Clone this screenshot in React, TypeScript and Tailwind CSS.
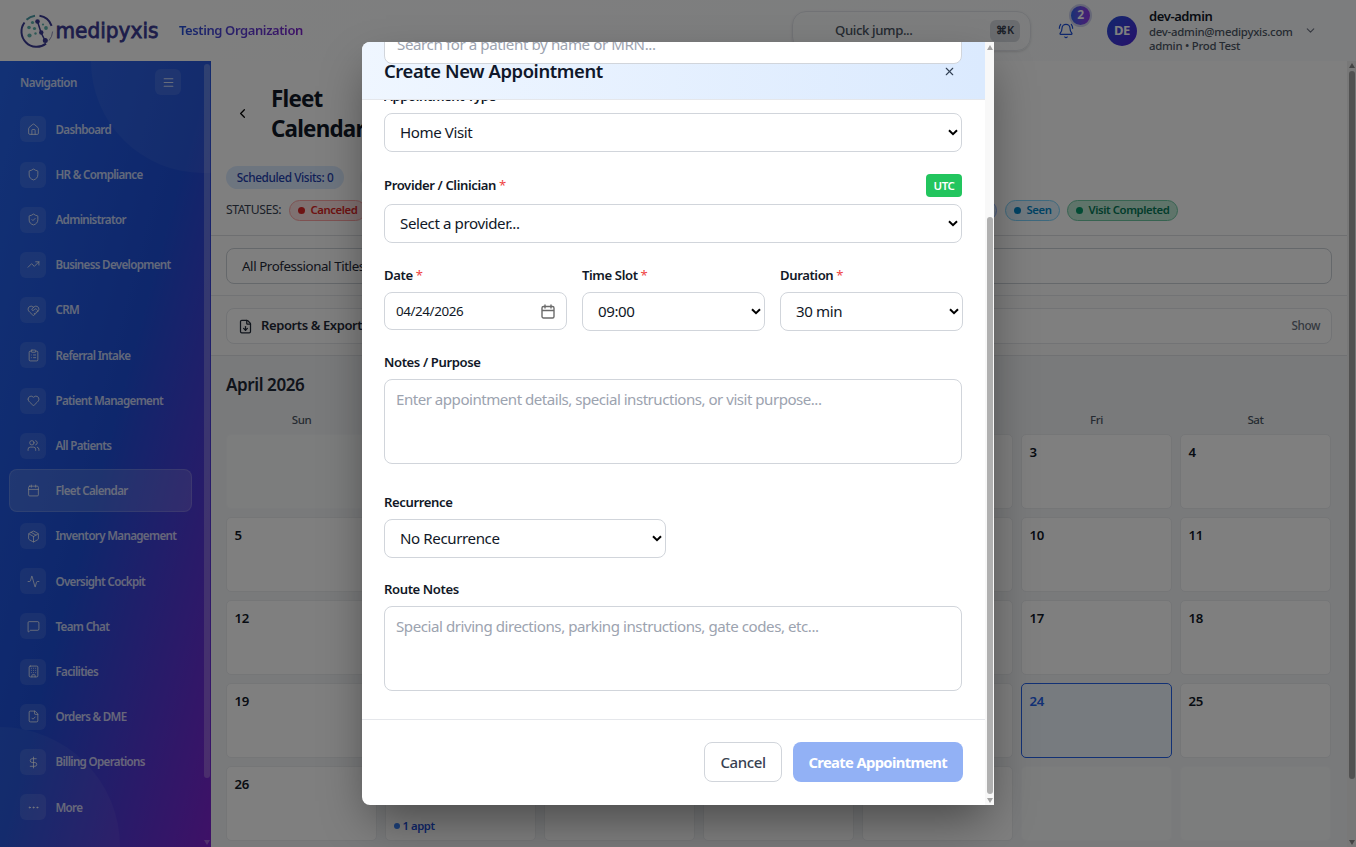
import React from "react";
import {
  House, Shield, ShieldCheck, TrendingUp, HeartHandshake, ClipboardList, Heart, Users, Calendar, Package,
  Activity, MessageSquare, Building, FileCheck, DollarSign, Ellipsis, Menu, ChevronLeft, ChevronDown, X, BellRing, FileDown,
} from "lucide-react";

const NAV: [string, React.ElementType][] = [
  ["Dashboard", House],
  ["HR & Compliance", Shield],
  ["Administrator", ShieldCheck],
  ["Business Development", TrendingUp],
  ["CRM", HeartHandshake],
  ["Referral Intake", ClipboardList],
  ["Patient Management", Heart],
  ["All Patients", Users],
  ["Fleet Calendar", Calendar],
  ["Inventory Management", Package],
  ["Oversight Cockpit", Activity],
  ["Team Chat", MessageSquare],
  ["Facilities", Building],
  ["Orders & DME", FileCheck],
  ["Billing Operations", DollarSign],
  ["More", Ellipsis],
];

const DAYS = ["Sun", "Mon", "Tue", "Wed", "Thu", "Fri", "Sat"];
const FIRST_WEEKDAY = 3;
const CELLS = Array.from({ length: 35 }, (_, i) => {
  const d = i - FIRST_WEEKDAY + 1;
  return d >= 1 && d <= 30 ? d : null;
});

function Logo() {
  return (
    <svg width="142" height="36" viewBox="0 0 142 36" className="block overflow-visible">
      <g fill="none" stroke="#3a3a94" strokeWidth="2">
        <path d="M4.5 9.5 A15.2 15.2 0 0 0 26 30.6" />
        <path d="M29 27.5 A15.2 15.2 0 0 0 32.6 18.5" strokeWidth="1" stroke="#8f90b8" />
        <path d="M6.5 6.8 A15.2 15.2 0 0 1 15 2.7" stroke="#4a9aa5" />
        <path d="M19.5 2.8 A15.2 15.2 0 0 1 31.6 12.8" />
        <path d="M17.5 8.5 L21 19.5 L25 27.5" strokeWidth="1.5" />
      </g>
      <g fill="#3a3a94">
        <circle cx="17.5" cy="8.5" r="2.3" />
        <circle cx="21.3" cy="19.5" r="2.2" />
        <circle cx="25.3" cy="27.5" r="2.5" />
      </g>
      <g fill="#5fb3ae">
        <circle cx="12.5" cy="9.5" r="1.6" />
        <circle cx="9" cy="14.5" r="1.8" />
        <circle cx="14.5" cy="15.5" r="1.6" />
        <circle cx="9.5" cy="22.5" r="2.1" />
        <circle cx="15.5" cy="20.5" r="1.2" />
        <circle cx="26" cy="15" r="1.9" />
        <circle cx="23" cy="11.5" r="1.1" />
      </g>
      <text x="35.5" y="24.8" fontSize="21.5" fill="#3a3a94" stroke="#3a3a94" strokeWidth="0.8" textLength="103" lengthAdjust="spacingAndGlyphs" letterSpacing="0" fontFamily="DejaVu Sans, sans-serif">
        medipyxis
      </text>
    </svg>
  );
}

function Header() {
  return (
    <header className="flex h-[61px] shrink-0 items-center bg-gradient-to-r from-white to-[#f8fafc]">
      <div className="ml-[20px] w-[159px]"><Logo /></div>
      <div className="w-[613px] bg-gradient-to-r from-[#1d4ed8] to-[#7e22ce] bg-[length:124px_100%] bg-clip-text text-[13px] font-semibold text-transparent">
        Testing Organization
      </div>
      <div className="flex h-10 w-[239px] items-center justify-between rounded-[14px] border border-[#e2e5ea] pr-2.5 pl-[42px] shadow-sm">
        <span className="text-[13.2px] font-medium text-[#4b5563]">Quick jump...</span>
        <span className="flex h-[22px] w-[30px] items-center justify-center rounded-md bg-[#d5d8de] text-[11px] font-semibold text-[#374151]">⌘K</span>
      </div>
      <div className="relative ml-[27px] h-4 w-4 text-[#1d4ed8]">
        <BellRing size={16} strokeWidth={1.8} />
        <span className="absolute -top-[19px] left-[11px] flex h-[23px] w-[23px] items-center justify-center rounded-full border-2 border-[#cdd0ee] bg-gradient-to-r from-[#2563eb] to-[#9333ea] text-[12px] font-bold text-white">2</span>
      </div>
      <div className="ml-[33px] flex h-[30px] w-[30px] items-center justify-center rounded-full bg-gradient-to-br from-[#1d4ed8] to-[#4c1dd8] text-[13px] font-bold text-white">DE</div>
      <div className="ml-[12px] w-[155px]">
        <div className="text-[13px] leading-[17px] font-semibold text-[#111827]">dev-admin</div>
        <div className="text-[11.4px] leading-[14px] font-medium tracking-[-0.022em] text-[#4b5563]">dev-admin@medipyxis.com</div>
        <div className="text-[11.4px] leading-[14px] font-medium tracking-[-0.022em] text-[#4b5563]">admin • Prod Test</div>
      </div>
      <ChevronDown size={13} className="text-[#6b7280]" />
    </header>
  );
}

function Sidebar() {
  return (
    <aside className="relative flex w-[211px] shrink-0 overflow-hidden bg-[linear-gradient(to_bottom_right,#2563eb_0%,#1d4ed8_50%,#7e22ce_100%)]">
      <div className="absolute -top-[112px] left-[91px] h-56 w-56 rounded-full bg-white/5" />
      <div className="absolute -bottom-[120px] -left-[120px] h-60 w-60 rounded-full bg-white/5" />
      <div className="relative w-[203px] text-white/75">
        <div className="flex h-[46.8px] items-start justify-between pt-[8px] pr-[22px] pl-5">
          <span className="text-[11.7px] leading-[26px] font-semibold tracking-[-0.05em]">Navigation</span>
          <span className="flex h-[26px] w-[26px] items-center justify-center rounded-md bg-white/10"><Menu size={13} /></span>
        </div>
        <nav className="flex flex-col gap-[2px] pr-[11px] pl-[9px]">
          {NAV.map(([label, Icon]) => (
            <div
              key={label}
              className={
                label === "Fleet Calendar"
                  ? "flex h-[43.2px] shrink-0 items-center rounded-lg border border-white/15 bg-white/15 pl-2.5"
                  : "flex h-[43.2px] shrink-0 items-center rounded-lg border border-transparent pl-2.5"
              }
            >
              <span className={label === "Fleet Calendar" ? "flex h-[26px] w-[26px] items-center justify-center" : "flex h-[26px] w-[26px] items-center justify-center rounded-md bg-white/10"}>
                <Icon size={13} strokeWidth={1.8} />
              </span>
              <span className="ml-[9.5px] text-[11.6px] font-semibold tracking-[-0.058em]">{label}</span>
            </div>
          ))}
        </nav>
      </div>
      <div className="relative flex w-2 flex-col items-center justify-between pt-[3px] pb-[2px]">
        <div className="h-[714px] w-[6px] rounded-full bg-white/25" />
        <div className="h-0 w-0 border-x-[3px] border-t-[5px] border-x-transparent border-t-white/30" />
      </div>
    </aside>
  );
}

function Status({ label, tone, dot }: { label: string; tone: string; dot: string }) {
  return (
    <span className={`flex h-[21px] items-center gap-[6px] rounded-full border px-[7.5px] text-[11.3px] font-semibold ${tone}`}>
      <span className={`h-[7px] w-[7px] rounded-full ${dot}`} />
      {label}
    </span>
  );
}

function Main() {
  return (
    <main className="flex min-w-0 flex-1 bg-[#f3f5f7]">
      <div className="flex w-[1136px] flex-col">
        <section className="h-[175px] shrink-0 border-b border-[#dcdfe3] bg-white pl-[15px]">
          <div className="flex h-[105px] items-center">
            <ChevronLeft size={15} className="ml-[9px]" />
            <h1 className="ml-[21px] pt-[1px] text-[22.4px] leading-[30px] font-bold tracking-[-0.035em] text-[#111827]">
              Fleet<br />Calendar
            </h1>
          </div>
          <div className="flex gap-[16px]">
            <span className="flex h-[23px] w-[118px] items-center justify-center rounded-full bg-[#dbeafe] text-[11.8px] font-medium text-[#1e40af]">Scheduled Visits: 0</span>
            <span className="h-[23px] w-[110px] rounded-full bg-[#f3f4f6]" />
          </div>
          <div className="mt-[11px] flex h-[21px] items-center">
            <span className="w-[63px] text-[12.2px] text-[#374151]">STATUSES:</span>
            <div className="w-[709px]">
              <div className="flex">
                <Status label="Canceled" tone="border-[#fca5a5] bg-[#fee2e2] text-[#dc2626]" dot="bg-[#dc2626]" />
              </div>
            </div>
            <div className="-ml-[83px] h-[21px] w-[82px] rounded-full border border-[#93b4fd] bg-[#dbeafe]" />
            <div className="ml-[8px] flex gap-[7px]">
              <Status label="Seen" tone="border-[#7dd3fc] bg-[#e0f2fe] text-[#0284c7]" dot="bg-[#0284c7]" />
              <Status label="Visit Completed" tone="border-[#6ec7a3] bg-[#bfe8d4] text-[#047857]" dot="bg-[#059669]" />
            </div>
          </div>
        </section>
        <section className="h-[60px] shrink-0 border-b border-[#e5e7eb] bg-[#fdfdfd] px-[15px] pt-[12px]">
          <div className="flex h-[36px] items-center rounded-lg border border-[#cbd0d6] bg-white pt-[2px] pl-[15px] text-[13.3px] text-[#1f2937]">All Professional Titles</div>
        </section>
        <section className="h-[60px] shrink-0 border-b border-[#e0e3e6] bg-[#fafbfb] px-[15px] pt-[12px]">
          <div className="flex h-[36px] items-center justify-between rounded-lg border border-[#e5e7eb] bg-white pr-[11px] pl-[11px]">
            <span className="flex items-center gap-[8px] text-[13px] font-semibold tracking-[-0.03em] text-[#1f2937]"><FileDown size={15} />Reports &amp; Exports</span>
            <span className="text-[11.7px] font-medium text-[#6b7280]">Show</span>
          </div>
        </section>
        <section className="pt-[16px] pr-[16px] pl-[15px]">
          <h2 className="text-[17px] leading-[26px] font-semibold text-[#1f2937]">April 2026</h2>
          <div className="mt-[14px] grid grid-cols-7 gap-x-2 text-center text-[11.5px] leading-[16px] font-medium text-[#4b5563]">
            {DAYS.map((d) => <span key={d}>{d}</span>)}
          </div>
          <div className="mt-[6px] grid grid-cols-7 gap-2">
            {CELLS.map((d, i) => (
              <div
                key={i}
                className={
                  d === 24
                    ? "h-[75px] rounded-[5px] border border-[#2563eb] bg-[#eff6ff] px-[7.5px] pt-[8px] text-[13.2px] leading-[18px] font-semibold text-[#2563eb]"
                    : d
                    ? "h-[75px] rounded-[5px] border border-[#eaecef] bg-white px-[7.5px] pt-[8px] text-[13.2px] leading-[18px] font-semibold text-[#111827]"
                    : "h-[75px] rounded-[5px] border border-[#f4f6f8] bg-[#f9fafb]"
                }
              >
                {d}
                {d === 27 && (
                  <div className="mt-[25px] flex items-center gap-[3px] text-[11.3px] leading-[16px] tracking-[-0.04em] text-[#1d4ed8]">
                    <span className="h-[6px] w-[6px] rounded-full bg-[#3b82f6]" />1 appt
                  </div>
                )}
              </div>
            ))}
          </div>
        </section>
      </div>
      <div className="flex w-[9px] flex-col items-center justify-between bg-[#f1f1f1] pt-[2px] pb-[2px]">
        <div>
          <div className="mb-[3px] h-0 w-0 border-x-[3px] border-b-[5px] border-x-transparent border-b-[#888]" />
          <div className="h-[708px] w-[6px] rounded-full bg-[#a3a3a3]" />
        </div>
        <div className="h-0 w-0 border-x-[3px] border-t-[5px] border-x-transparent border-t-[#888]" />
      </div>
    </main>
  );
}

function Label({ children, required }: { children: React.ReactNode; required?: boolean }) {
  return (
    <div className="text-[13.1px] leading-[20px] font-semibold tracking-[-0.03em] text-[#111827]">
      {children}
      {required && <span className="font-normal text-[#ef4444]"> *</span>}
    </div>
  );
}

function Select({ value }: { value: string }) {
  return (
    <div className="flex h-[39px] items-center justify-between rounded-lg border border-[#d1d5db] bg-white pr-[3px] pl-[15px] text-[15.1px] text-[#111827]">
      {value}
      <svg width="10" height="8" viewBox="0 0 10 8" fill="none" stroke="#000" strokeWidth="2"><path d="M1 1.2 5 5.2 9 1.2" /></svg>
    </div>
  );
}

function Modal() {
  return (
    <div className="flex h-[763px] w-[632px] overflow-hidden rounded-l-lg bg-white shadow-[0_20px_45px_-8px_rgba(0,0,0,0.45)]">
      <div className="relative flex w-[623px] flex-col">
        <div className="flex h-[58px] shrink-0 items-center justify-between border-b border-[#e5e7eb] bg-gradient-to-r from-[#eff6ff] to-[#dbeafe] pt-[1px] pr-[29px] pl-[22px]">
          <h3 className="text-[18.4px] font-semibold text-[#0f172a]">Create New Appointment</h3>
          <X size={13} className="text-[#334155]" />
        </div>
        <div className="absolute -top-[18px] left-[22px] h-[40px] w-[578px] rounded-lg border border-[#d1d5db] bg-white pt-[8px] pl-[12px] text-[15.1px] leading-[22px] text-[#9ca3af]">
          Search for a patient by name or MRN...
        </div>
        <div className="flex flex-1 flex-col pr-[23px] pl-[22px]">
          <div className="flex h-[6px] items-end overflow-hidden">
            <div className="h-[6px]"><div className="-mt-[14px]"><Label>Appointment Type</Label></div></div>
          </div>
          <div className="mt-[7px]"><Select value="Home Visit" /></div>
          <div className="mt-[22px] mb-[7px] flex h-[23px] items-center justify-between">
            <div className="-mt-[2px]"><Label required>Provider / Clinician</Label></div>
            <span className="flex h-[23px] w-[36px] items-center justify-center rounded bg-[#22c55e] text-[11.5px] font-semibold text-white">UTC</span>
          </div>
          <Select value="Select a provider..." />
          <div className="mt-[22px] grid grid-cols-[183px_183px_183px] gap-[15px]">
            <div>
              <Label required>Date</Label>
              <div className="mt-[7px] flex h-[38px] items-center justify-between rounded-lg border border-[#d1d5db] pr-[11px] pl-[11px] text-[13.4px] text-[#111827]">
                <span className="pt-[1px]">04/24/2026</span>
                <svg width="14" height="15" viewBox="0 0 14 15" fill="none" stroke="#6b6b6b" strokeWidth="1.4">
                  <rect x="1" y="2.5" width="12" height="11.5" rx="1.5" />
                  <path d="M1 6.5h12M4 0.5v4M10 0.5v4" />
                </svg>
              </div>
            </div>
            <div className="flex flex-col gap-[7px]"><Label required>Time Slot</Label><Select value="09:00" /></div>
            <div className="flex flex-col gap-[7px]"><Label required>Duration</Label><Select value="30 min" /></div>
          </div>
          <div className="mt-[21px]"><Label>Notes / Purpose</Label></div>
          <div className="mt-[7px] h-[85px] shrink-0 rounded-lg border border-[#d1d5db] pt-[8px] pl-[11px] text-[15.1px] leading-[22px] tracking-[-0.033em] text-[#9ca3af]">
            Enter appointment details, special instructions, or visit purpose...
          </div>
          <div className="mt-[28px]"><Label>Recurrence</Label></div>
          <div className="mt-[7px] w-[282px]"><Select value="No Recurrence" /></div>
          <div className="mt-[21px]"><Label>Route Notes</Label></div>
          <div className="mt-[7px] h-[85px] shrink-0 rounded-lg border border-[#d1d5db] pt-[8px] pl-[11px] text-[15.1px] leading-[22px] tracking-[-0.03em] text-[#9ca3af]">
            Special driving directions, parking instructions, gate codes, etc...
          </div>
        </div>
        <div className="flex h-[86px] shrink-0 items-start justify-end gap-[11px] border-t border-[#e5e7eb] pt-[22px] pr-[22.5px] text-[15px]">
          <span className="flex h-[40px] w-[78px] items-center justify-center rounded-lg border border-[#d1d5db] font-medium text-[#374151]">Cancel</span>
          <span className="flex h-[40px] w-[169.5px] items-center justify-center rounded-lg bg-[#92b1f5] text-[14.8px] font-bold tracking-[-0.045em] text-white">Create Appointment</span>
        </div>
      </div>
      <div className="flex w-[9px] flex-col items-center justify-between bg-[#f8f8f8] pt-[3px] pb-[2px]">
        <div className="h-0 w-0 border-x-[3px] border-b-[5px] border-x-transparent border-b-[#a3a3a3]" />
        <div className="flex flex-col items-center gap-[4px]">
          <div className="h-[577px] w-[6px] rounded-full bg-[#b0b0b0]" />
          <div className="h-0 w-0 border-x-[3px] border-t-[5px] border-x-transparent border-t-[#a3a3a3]" />
        </div>
      </div>
    </div>
  );
}

export default function App() {
  return (
    <div className="relative h-[847px] w-[1356px] overflow-hidden whitespace-nowrap tracking-[-0.025em] [font-family:'Noto_Sans','Liberation_Sans',sans-serif]">
      <div className="flex h-full flex-col">
        <Header />
        <div className="flex min-h-0 flex-1">
          <Sidebar />
          <Main />
        </div>
      </div>
      <div className="absolute inset-0 flex items-center justify-center bg-black/50">
        <Modal />
      </div>
    </div>
  );
}
